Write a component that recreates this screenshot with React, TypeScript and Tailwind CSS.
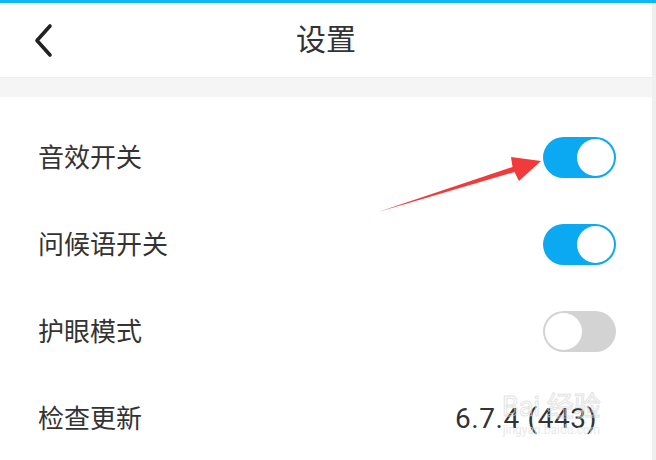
import { useState } from "react";

const rows = [
  { label: "音效开关", type: "toggle", on: true },
  { label: "问候语开关", type: "toggle", on: true },
  { label: "护眼模式", type: "toggle", on: false },
  { label: "检查更新", type: "text", value: "6.7.4 (443)" },
];

function Toggle({ on }: { on: boolean }) {
  return (
    <div
      className={`flex h-[41px] w-[73px] items-center rounded-full p-[2px] ${
        on ? "justify-end bg-[#0aa9f2]" : "justify-start bg-[#d3d3d3]"
      }`}
    >
      <div className="h-[37px] w-[37px] rounded-full bg-white" />
    </div>
  );
}

export default function App() {
  const [items] = useState(rows);

  return (
    <div className="relative h-[460px] w-[656px] overflow-hidden bg-white font-['Roboto','Noto_Sans_CJK_SC',sans-serif] text-[#333]">
      <div className="h-[3px] bg-[#10b7f7]" />
      <div className="flex h-[457px]">
        <div className="flex-1">
          {/* header */}
          <div className="relative flex h-[74px] items-center justify-center">
            <svg className="absolute left-[33px] top-[19px]" width="22" height="36" viewBox="0 0 22 36">
              <path d="M17 4 L4 18.5 L17 33" fill="none" stroke="#222" strokeWidth="3.6" strokeLinecap="round" strokeLinejoin="round" />
            </svg>
            <span className="text-[30px] leading-none">设置</span>
          </div>
          <div className="h-[20px] border-t border-[#ececec] bg-[#f5f5f5]" />

          <div className="pt-[17px]">
            {items.map((r) => (
              <div key={r.label} className="flex h-[87px] items-center justify-between pl-[38px] pr-[36px]">
                <span className="text-[26px] leading-none">{r.label}</span>
                {r.type === "toggle" ? (
                  <Toggle on={!!r.on} />
                ) : (
                  <span className="mr-[19px] text-[28px] leading-none tracking-[0.6px] text-[#333]">{r.value}</span>
                )}
              </div>
            ))}
          </div>
        </div>
        <div className="w-[4px] bg-[#efefef]" />
      </div>

      {/* watermark */}
      <div className="pointer-events-none absolute left-[502px] top-[394px] flex flex-col items-center leading-none opacity-70">
        <span className="text-[27px] text-transparent [-webkit-text-stroke:1px_#d8d8d8]">Bai 经验</span>
        <span className="mt-[3px] text-[12px] text-[#e0e0e0]">jingyan.baidu.com</span>
      </div>

      {/* annotation arrow */}
      <svg className="pointer-events-none absolute inset-0" width="656" height="460" viewBox="0 0 656 460">
        <polygon
          points="378,212 514.5,172 519,181 541,161 511,157 512.5,167"
          fill="#f23a3a"
        />
      </svg>
    </div>
  );
}
